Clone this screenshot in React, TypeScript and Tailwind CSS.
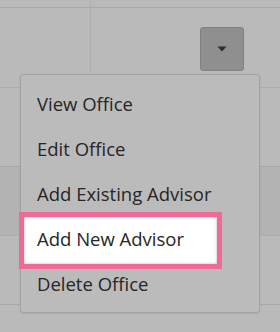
import React from "react";

export default function App() {
  const items = ["View Office", "Edit Office", "Add Existing Advisor", "Add New Advisor", "Delete Office"];
  return (
    <div
      className="relative w-[280px] h-[332px] overflow-hidden bg-[#bababa]"
      style={{ fontFamily: '"Open Sans", "Noto Sans", sans-serif' }}
    >
      {/* background table */}
      <div className="flex flex-col">
        <div className="h-[8px] border-b border-[#a8a8a8] flex">
          <div className="w-[91px] border-r border-[#adadad]" />
        </div>
        <div className="h-[80px] border-b border-[#adadad] flex">
          <div className="w-[91px] border-r border-[#adadad]" />
          <div className="flex-1 flex justify-end pt-[19px] pr-[36px]">
            <div className="w-[44px] h-[44px] rounded-[3px] bg-[#8f8f8f] border border-[#818181] flex items-center justify-center">
              <svg width="10" height="6" viewBox="0 0 10 6">
                <path d="M0.5 0.5 L9.5 0.5 L5 5.5 Z" fill="#2c2c2c" />
              </svg>
            </div>
          </div>
        </div>
        <div className="h-[79px] border-b border-[#a6a6a6]" />
        <div className="h-[69px] border-b border-[#adadad] bg-[#b3b3b3]" />
        <div className="h-[69px] border-b border-[#a8a8a8]" />
      </div>

      {/* dropdown menu */}
      <div className="absolute left-[20px] top-[74px] w-[240px] rounded-[3px] border border-[#a2a2a2] bg-[#bbbbbb] py-[6px] shadow-[0_1px_2px_rgba(0,0,0,0.08)]">
        {items.map((t, i) =>
          i === 3 ? (
            <div key={t} className="h-[45px] relative">
              <div className="absolute left-[3px] top-[1px] w-[193px] h-[47px] bg-white outline-[5px] outline-solid outline-[#ee6b96] shadow-[inset_0_0_3px_rgba(0,0,0,0.3)]" />
              <div className="relative h-[45px] leading-[45px] pl-[16px] text-[18.5px] text-[#262626] whitespace-nowrap">
                {t}
              </div>
            </div>
          ) : (
            <div key={t} className="h-[45px] leading-[45px] pl-[16px] text-[18.5px] text-[#262626] whitespace-nowrap">
              {t}
            </div>
          )
        )}
      </div>
    </div>
  );
}
